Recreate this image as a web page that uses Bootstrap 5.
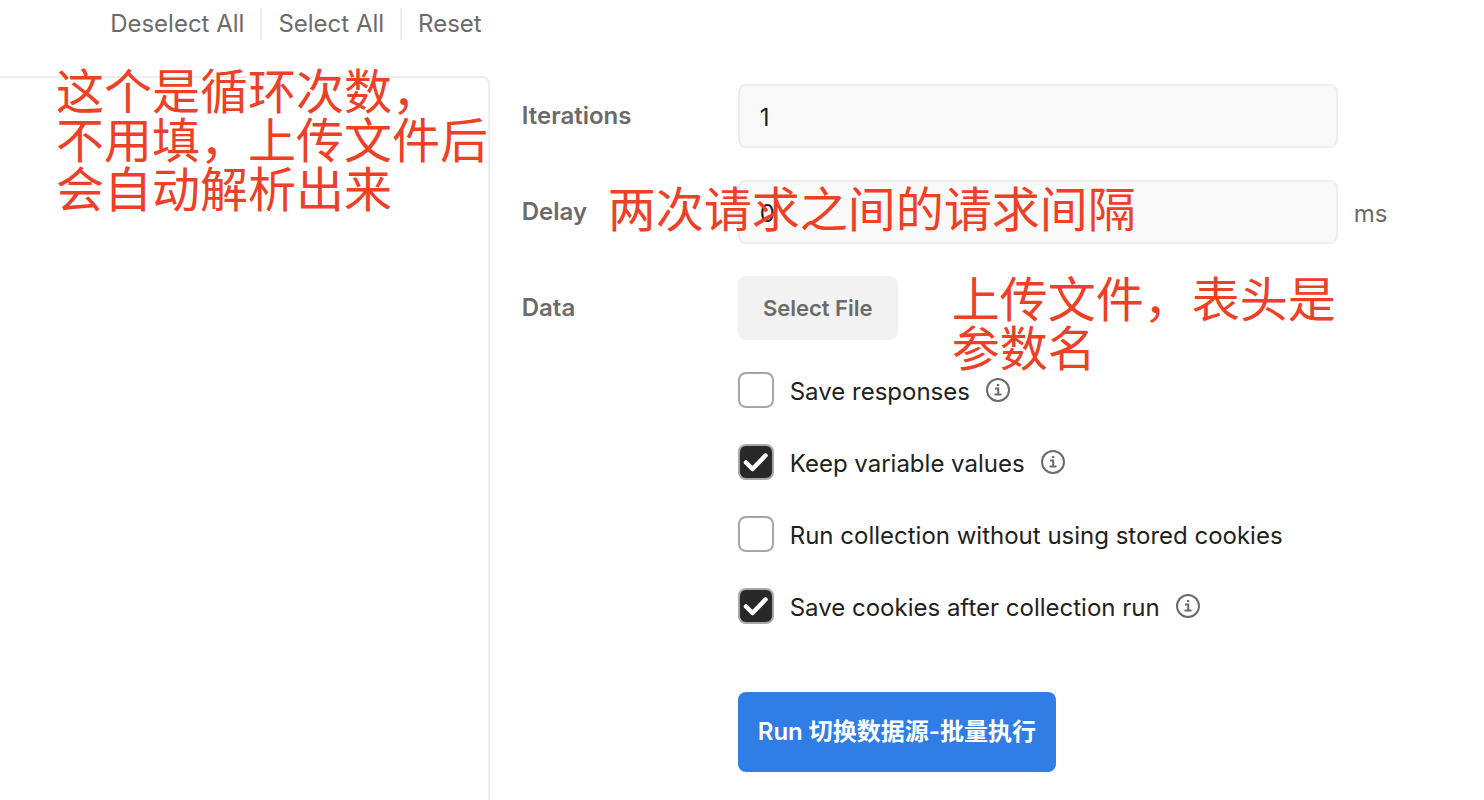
<!DOCTYPE html>
<html lang="en">
<head>
<meta charset="utf-8">
<meta name="viewport" content="width=device-width, initial-scale=1">
<title>Collection Runner</title>
<link href="https://cdn.jsdelivr.net/npm/bootstrap@5.3.0/dist/css/bootstrap.min.css" rel="stylesheet">
<style>
  body { font-family: Inter, "Noto Sans CJK SC", sans-serif; font-size: 24px; line-height: 32px; color: #212121; background: #fff; overflow-x: hidden; }
  .runner { display: grid; grid-template-columns: 33% 1fr; }
  .toolbar { height: 76px; padding: 8px 8px 0 0; }
  .toolbar .btn { font-size: 24px; line-height: 32px; color: #6b6b6b; padding: 0 16px; border: 0; border-radius: 0; }
  .toolbar .btn:last-child { padding-right: 0; }
  .toolbar .btn + .btn { border-left: 2px solid #ededed; }
  .request-panel { border: solid #ededed; border-width: 2px 2px 0 0; border-top-right-radius: 8px; }
  .settings { padding: 84px 32px 28px; }
  .field-name { width: 216px; font-weight: 600; color: #6b6b6b; }
  .field-box { max-width: 600px; height: 64px; font-size: 24px; line-height: 32px; color: #212121; background: #f9f9f9; border: 2px solid #ededed; border-radius: 8px; padding: 2px 20px 0; }
  .unit { color: #6b6b6b; padding-top: 4px; }
  .btn-file { width: 160px; height: 64px; padding: 0; font-size: 22px; font-weight: 600; color: #6b6b6b; background: #f2f2f2; border: 0; border-radius: 8px; }
  .options { margin-left: 216px; row-gap: 36px; }
  .options .form-check-input { width: 36px; height: 36px; border: 2px solid #a6a6a6; border-radius: 8px; }
  .options .form-check-input:checked { background-color: #282828; border-color: #a6a6a6; background-size: 32px;
    background-image: url("data:image/svg+xml,%3csvg xmlns='http://www.w3.org/2000/svg' viewBox='0 0 32 32'%3e%3cpath fill='none' stroke='%23fff' stroke-width='4.500' stroke-linecap='round' stroke-linejoin='round' d='M6 16.500l6.500 6.500L25.500 9.500'/%3e%3c/svg%3e"); }
  .options label { padding-top: 3px; }
  .info { width: 24px; height: 24px; }
  .btn-run { height: 80px; padding: 0 20px; font-size: 24px; font-weight: 600; color: #fff; background: #307de6; border: 0; border-radius: 8px; margin: 68px 0 0 216px; }
  .note { font-family: "Noto Sans CJK SC", sans-serif; font-size: 48px; line-height: 49px; color: #ee4026; white-space: nowrap; pointer-events: none; margin: 0; z-index: 2; }
  .note-loops { top: -14px; left: 56px; }
  .note-delay { top: 2px; left: 86px; }
  .note-file { top: -4px; left: 430px; }
</style>
</head>
<body>
<main class="runner min-vh-100">
  <section class="d-flex flex-column">
    <div class="toolbar d-flex justify-content-end align-items-start">
      <button type="button" class="btn">Deselect All</button>
      <button type="button" class="btn">Select All</button>
      <button type="button" class="btn">Reset</button>
    </div>
    <div class="request-panel flex-grow-1 position-relative">
      <p class="note note-loops position-absolute" lang="zh-CN">这个是循环次数，<br>不用填，上传文件后<br>会自动解析出来</p>
    </div>
  </section>

  <form class="settings d-flex flex-column">
    <div class="d-flex align-items-center mb-4 pb-2">
      <label class="field-name flex-shrink-0" for="iterations">Iterations</label>
      <input class="form-control field-box" type="text" id="iterations" value="1">
    </div>
    <div class="d-flex align-items-center mb-4 pb-2 position-relative">
      <label class="field-name flex-shrink-0" for="delay">Delay</label>
      <input class="form-control field-box" type="text" id="delay" value="0">
      <span class="unit ms-3">ms</span>
      <p class="note note-delay position-absolute" lang="zh-CN">两次请求之间的请求间隔</p>
    </div>
    <div class="d-flex align-items-center mb-4 pb-2 position-relative">
      <label class="field-name flex-shrink-0" for="data-file">Data</label>
      <button type="button" class="btn btn-file" id="data-file">Select File</button>
      <p class="note note-file position-absolute" lang="zh-CN">上传文件，表头是<br>参数名</p>
    </div>

    <div class="options d-grid">
      <div class="d-flex align-items-center">
        <input class="form-check-input m-0 me-3 flex-shrink-0" type="checkbox" id="save-responses">
        <label for="save-responses">Save responses</label>
        <svg class="info ms-3" viewBox="0 0 24 24" fill="none" stroke="#6b6b6b" stroke-width="2" aria-hidden="true"><circle cx="12" cy="12" r="11"/><path d="M9 10.500h3.200V16M8.500 16.500h7"/><path d="M11 7h2.200"/></svg>
      </div>
      <div class="d-flex align-items-center">
        <input class="form-check-input m-0 me-3 flex-shrink-0" type="checkbox" id="keep-values" checked>
        <label for="keep-values">Keep variable values</label>
        <svg class="info ms-3" viewBox="0 0 24 24" fill="none" stroke="#6b6b6b" stroke-width="2" aria-hidden="true"><circle cx="12" cy="12" r="11"/><path d="M9 10.500h3.200V16M8.500 16.500h7"/><path d="M11 7h2.200"/></svg>
      </div>
      <div class="d-flex align-items-center">
        <input class="form-check-input m-0 me-3 flex-shrink-0" type="checkbox" id="no-cookies">
        <label for="no-cookies">Run collection without using stored cookies</label>
      </div>
      <div class="d-flex align-items-center">
        <input class="form-check-input m-0 me-3 flex-shrink-0" type="checkbox" id="save-cookies" checked>
        <label for="save-cookies">Save cookies after collection run</label>
        <svg class="info ms-3" viewBox="0 0 24 24" fill="none" stroke="#6b6b6b" stroke-width="2" aria-hidden="true"><circle cx="12" cy="12" r="11"/><path d="M9 10.500h3.200V16M8.500 16.500h7"/><path d="M11 7h2.200"/></svg>
      </div>
    </div>

    <button type="submit" class="btn btn-run align-self-start">Run 切换数据源-批量执行</button>
  </form>
</main>
<script src="https://cdn.jsdelivr.net/npm/bootstrap@5.3.0/dist/js/bootstrap.bundle.min.js"></script>
</body>
</html>
